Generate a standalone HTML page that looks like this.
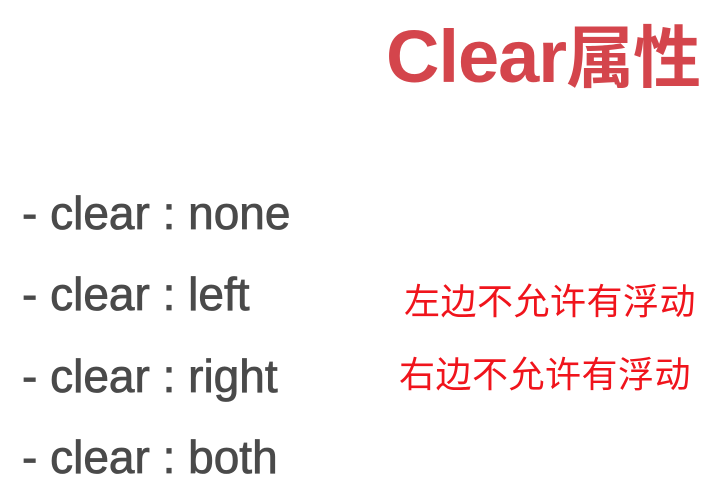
<!DOCTYPE html>
<html><head><meta charset="utf-8"><style>
body{margin:0;width:712px;height:504px;background:#fff;position:relative;overflow:hidden}
div{position:absolute;white-space:nowrap;line-height:1}
.t{left:386px;top:3px;font:bold 74px "Liberation Sans","Noto Sans CJK SC",sans-serif;color:#d4454c;letter-spacing:-1px}
.l{left:22px;font:46px "Liberation Sans",sans-serif;color:#4a4a4a;-webkit-text-stroke:0.8px #4a4a4a}
.r{font:36px "Noto Sans CJK SC",sans-serif;color:#f0141c;letter-spacing:0.5px}
</style></head><body>
<div class="t">Clear<span style="font-size:68px;font-weight:bold">属性</span></div>
<div class="l" style="top:186px">- clear : none</div>
<div class="l" style="top:267px">- clear : left</div>
<div class="l" style="top:349px">- clear : right</div>
<div class="l" style="top:430px">- clear : both</div>
<div class="r" style="left:404px;top:273px">左边不允许有浮动</div>
<div class="r" style="left:399px;top:346px">右边不允许有浮动</div>
</body></html>
